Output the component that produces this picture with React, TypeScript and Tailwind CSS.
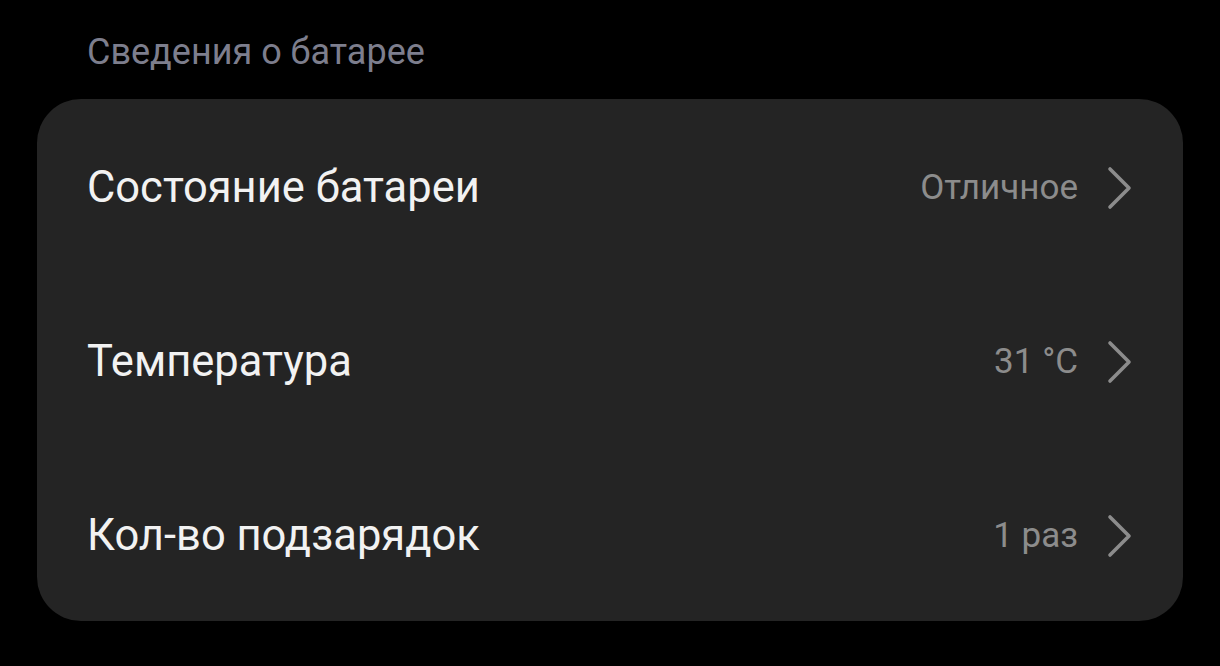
import React from "react";

function Chevron() {
  return (
    <svg width="26" height="44" viewBox="0 0 26 44" fill="none" className="shrink-0">
      <path d="M3 3 L22 22 L3 41" stroke="#8c8c8c" strokeWidth="3.6" strokeLinecap="round" strokeLinejoin="round" />
    </svg>
  );
}

const rows = [
  { label: "Состояние батареи", value: "Отличное" },
  { label: "Температура", value: "31 °C" },
  { label: "Кол-во подзарядок", value: "1 раз" },
];

export default function App() {
  return (
    <div
      className="w-[1220px] h-[666px] bg-black overflow-hidden"
      style={{ fontFamily: "Roboto, 'Noto Sans', sans-serif" }}
    >
      <div className="pl-[87px] pt-[29px] h-[99px]">
        <div className="text-[36px] leading-[46px] text-[#7d7e8d]">Сведения о батарее</div>
      </div>
      <div className="mx-[37px] w-[1146px] rounded-[44px] bg-[#242424]">
        {rows.map((r) => (
          <div key={r.label} className="h-[174px] flex items-center pl-[50px] pr-[50px] pt-[4px]">
            <div className="flex-1 text-[43.5px] text-[#f2f2f2]">{r.label}</div>
            <div className="text-[35px] text-[#8c8c8c] mr-[29px]">{r.value}</div>
            <Chevron />
          </div>
        ))}
      </div>
    </div>
  );
}
